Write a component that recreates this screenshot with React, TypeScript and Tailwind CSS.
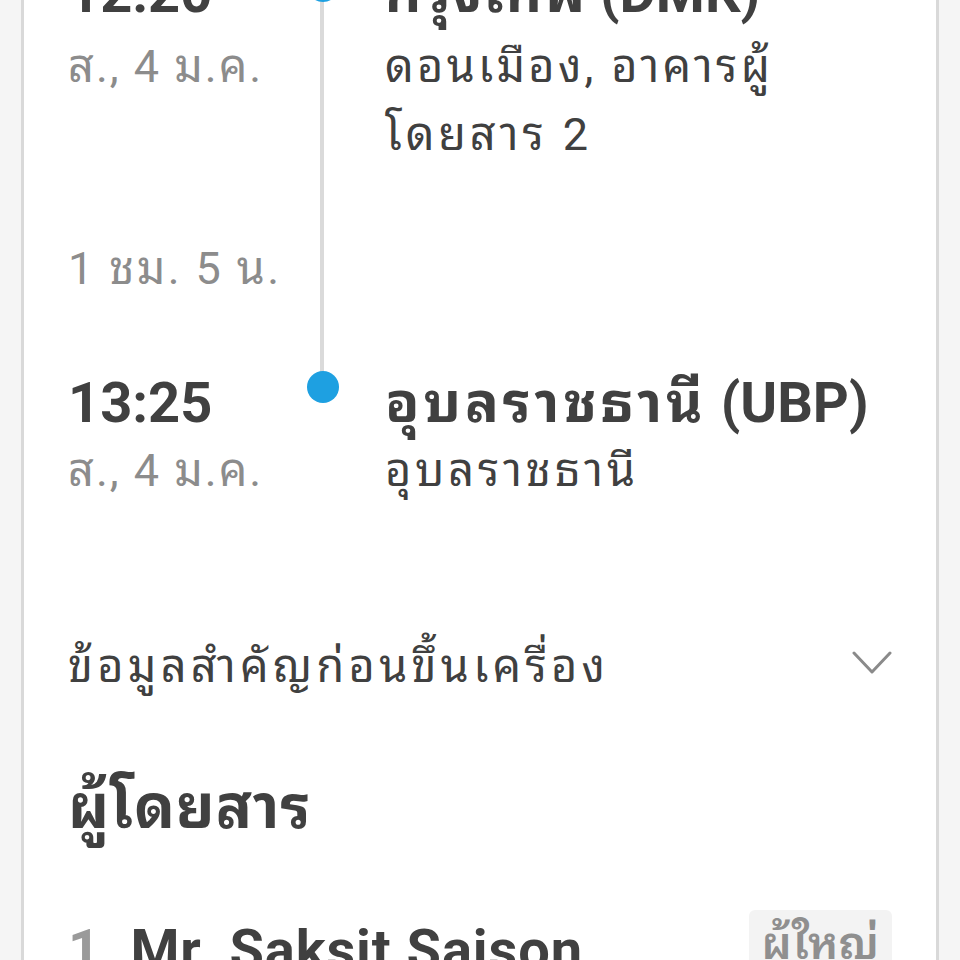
import React from 'react';

const font = { fontFamily: 'Roboto, "Noto Sans Thai Looped", "Noto Sans Thai", sans-serif' };

const Dot = ({ className }: { className: string }) => (
  <div className={`w-[32px] h-[32px] rounded-full bg-[#1ea0e1] ${className}`} />
);

export default function App() {
  return (
    <div className="h-[960px] overflow-hidden bg-[#f5f5f5]" style={font}>
      <div className="flow-root mx-[21px] h-full bg-white border-x-[3px] border-[#d9d9d9] px-[44px] text-[#404040]">
        {/* Flight timeline */}
        <div className="relative -mt-[43px]">
          <div className="absolute left-[252px] top-0 h-[415px] w-[4px] bg-[#dadada]" />

          {/* Departure */}
          <div className="flex items-start">
            <div className="w-[239px] shrink-0">
              <div className="text-[56px] leading-[72px] font-bold">12:20</div>
              <div className="mt-[4px] text-[45px] leading-[68px] text-[#8c8c8c] tracking-[2px] whitespace-nowrap">ส., 4 ม.ค.</div>
            </div>
            <div className="w-[32px] shrink-0 relative">
              <Dot className="mt-[13px]" />
            </div>
            <div className="ml-[46px] flex-1">
              <div className="text-[56px] leading-[72px] font-bold whitespace-nowrap">
                <span className="tracking-[1px]">กรุงเทพ</span> (DMK)
              </div>
              <div className="mt-[4px] text-[45px] leading-[68px] whitespace-nowrap">
                <div className="tracking-[3.3px]">ดอนเมือง, อาคารผู้</div>
                <div className="tracking-[3.9px]">โดยสาร 2</div>
              </div>
            </div>
          </div>

          {/* Duration */}
          <div className="mt-[66px] text-[45px] leading-[68px] text-[#8c8c8c] tracking-[2.4px] whitespace-nowrap">1 ชม. 5 น.</div>

          {/* Arrival */}
          <div className="mt-[64px] flex items-start">
            <div className="w-[239px] shrink-0">
              <div className="text-[56px] leading-[72px] font-bold">13:25</div>
              <div className="text-[45px] leading-[64px] text-[#8c8c8c] tracking-[2px] whitespace-nowrap">ส., 4 ม.ค.</div>
            </div>
            <div className="w-[32px] shrink-0 relative">
              <Dot className="mt-[4px]" />
            </div>
            <div className="ml-[46px] flex-1">
              <div className="text-[56px] leading-[72px] font-bold whitespace-nowrap">
                <span className="tracking-[4px]">อุบลราชธานี</span> (UBP)
              </div>
              <div className="text-[45px] leading-[64px] tracking-[3.9px]">อุบลราชธานี</div>
            </div>
          </div>
        </div>

        {/* Boarding info accordion */}
        <div className="mt-[130px] flex items-center justify-between">
          <div className="text-[45px] leading-[68px] tracking-[4.3px] whitespace-nowrap">ข้อมูลสำคัญก่อนขึ้นเครื่อง</div>
          <svg width="40" height="24" viewBox="0 0 40 24" fill="none" className="mt-[-8px]">
            <polyline points="2,2 20,21 38,2" stroke="#8a8a8a" strokeWidth="3" strokeLinecap="round" strokeLinejoin="round" />
          </svg>
        </div>

        {/* Passengers */}
        <div className="mt-[67px] text-[60px] leading-[80px] font-bold tracking-[1px]">ผู้โดยสาร</div>

        <div className="mt-[62px] flex items-start justify-between">
          <div className="pt-[4px] text-[56px] leading-[72px] font-bold flex gap-[14px] whitespace-nowrap">
            <span className="text-[#9a9a9a]">1.</span>
            <span className="tracking-[0.9px]">Mr. Saksit Saison</span>
          </div>
          <div className="rounded-[6px] bg-[#f3f3f3] px-[13px] text-[45px] leading-[68px] font-semibold text-[#8f8f8f]">
            ผู้ใหญ่
          </div>
        </div>
      </div>
    </div>
  );
}
